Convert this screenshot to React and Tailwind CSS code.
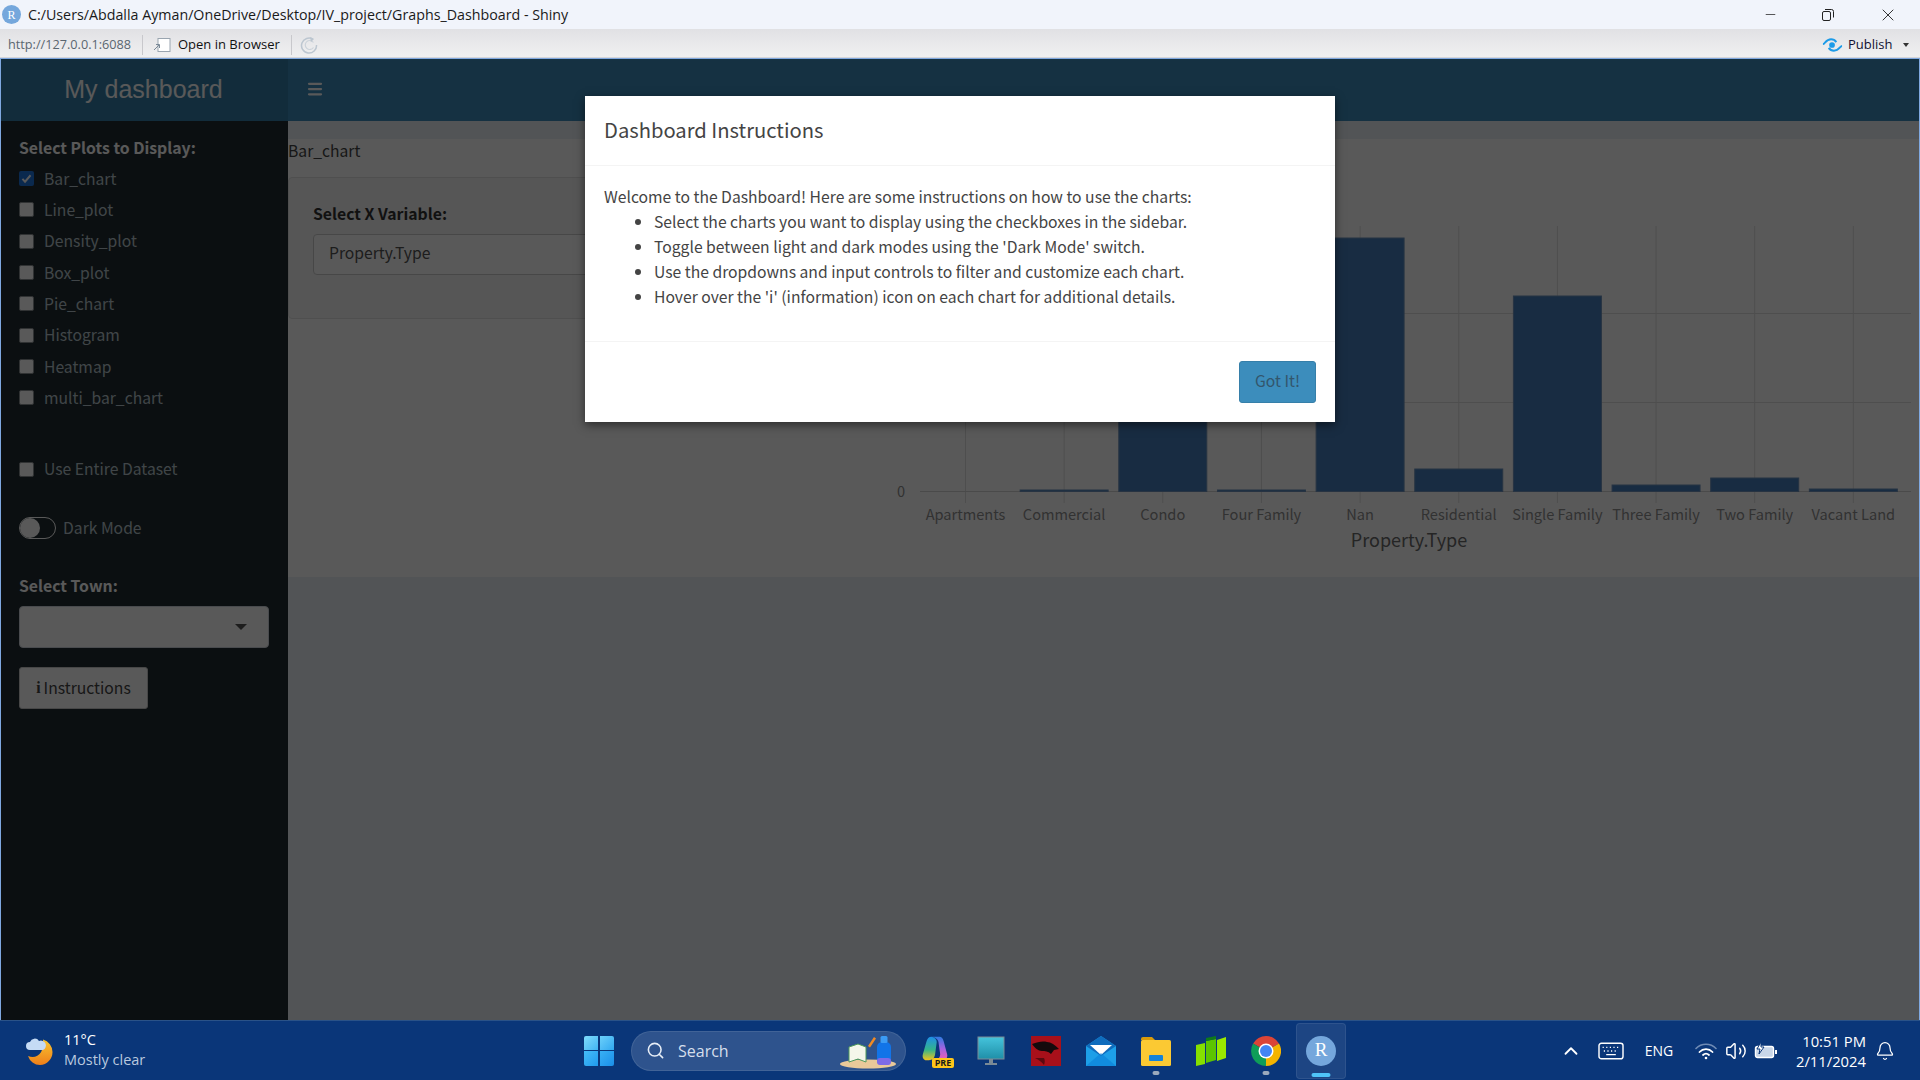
import React from 'react';
import { Search, Bell, Volume2, ChevronUp, Minus, X, Menu } from 'lucide-react';

const plots = ['Bar_chart', 'Line_plot', 'Density_plot', 'Box_plot', 'Pie_chart', 'Histogram', 'Heatmap', 'multi_bar_chart'];

const bars = [
    { name: 'Apartments', top: 491.5 },
    { name: 'Commercial', top: 490 },
    { name: 'Condo', top: 300 },
    { name: 'Four Family', top: 490 },
    { name: 'Nan', top: 238 },
    { name: 'Residential', top: 469 },
    { name: 'Single Family', top: 296 },
    { name: 'Three Family', top: 485 },
    { name: 'Two Family', top: 478 },
    { name: 'Vacant Land', top: 489 },
];

const instructions = [
    'Select the charts you want to display using the checkboxes in the sidebar.',
    "Toggle between light and dark modes using the 'Dark Mode' switch.",
    'Use the dropdowns and input controls to filter and customize each chart.',
    "Hover over the 'i' (information) icon on each chart for additional details.",
];

const Checkbox = ({ checked }) => (
    <span className={`w-[15px] h-[15px] rounded-[2px] flex items-center justify-center shrink-0 ${checked ? 'bg-[#1f75e0]' : 'bg-white border border-[#8a8f92]'}`}>
        {checked && (
            <svg viewBox="0 0 16 16" className="w-[13px] h-[13px]">
                <path d="M3 8.5l3.2 3.5L13 4" fill="none" stroke="#ffffff" strokeWidth="2.4" />
            </svg>
        )}
    </span>
);

const CheckRow = ({ label, checked }) => (
    <div className="h-[31.3px] flex items-center gap-[10px]">
        <Checkbox checked={checked} />
        <span className="text-[15.7px] text-[#b8c7ce] leading-none">{label}</span>
    </div>
);

const Sidebar = () => (
    <aside className="w-[287px] shrink-0 bg-[#222d32] px-[18px] pt-[17px]">
        <div className="h-[20px] leading-[20px] text-[15.8px] font-bold text-white">Select Plots to Display:</div>
        <div className="mt-[5px]">
            {plots.map((p, i) => <CheckRow key={p} label={p} checked={i === 0} />)}
        </div>
        <div className="mt-[40px]">
            <CheckRow label="Use Entire Dataset" />
        </div>
        <div className="mt-[32px] h-[22px] flex items-center gap-[7px]">
            <span className="w-[37px] h-[22px] rounded-full border border-white flex">
                <span className="w-[20px] h-[20px] rounded-full bg-white" />
            </span>
            <span className="text-[15.7px] text-[#b8c7ce] leading-none">Dark Mode</span>
        </div>
        <div className="mt-[37px] h-[20px] leading-[20px] text-[15.8px] font-bold text-white">Select Town:</div>
        <div className="mt-[10px] w-[250px] h-[42px] bg-white rounded-[4px] border border-[#d2d6de] flex items-center justify-end pr-[21px]">
            <span className="w-0 h-0 border-x-[6px] border-x-transparent border-t-[6px] border-t-[#555555]" />
        </div>
        <button className="mt-[19px] w-[129px] h-[42px] bg-white rounded-[3px] border border-[#cccccc] text-[15.7px] text-[#444444] flex items-center justify-center gap-[3px]">
            <span className="font-['Liberation_Serif',serif] font-bold">i</span>
            Instructions
        </button>
    </aside>
);

// plotly style bar chart, coordinates are page pixels minus the svg offset
const BarChart = () => {
    const ox = 880;
    const oy = 177;
    const cx = (i) => 965.5 - ox + i * 98.65;
    const base = 491.5 - oy;
    return (
        <svg width="1039" height="400" viewBox="0 0 1039 400" className="block shrink-0">
            {bars.map((b, i) => (
                <line key={b.name} x1={cx(i)} x2={cx(i)} y1={226 - oy} y2={503 - oy} stroke="#dfdfdf" />
            ))}
            {[313.5, 402.5].map((y) => (
                <line key={y} x1="40" x2="1031" y1={y - oy} y2={y - oy} stroke="#dfdfdf" />
            ))}
            <line x1="40" x2="1031" y1={base} y2={base} stroke="#d5d5d5" />
            {bars.map((b, i) => (
                b.top < 491 && <rect key={b.name} x={cx(i) - 44} y={b.top - oy} width="88" height={491.5 - b.top} fill="#457ebd" stroke="#6f93bd" strokeWidth="1" />
            ))}
            <text x="21" y={base + 5} textAnchor="middle" fontSize="14.6" fill="#8f8f8f">0</text>
            {bars.map((b, i) => (
                <text key={b.name} x={cx(i)} y={515 - oy + 5} textAnchor="middle" fontSize="14.6" fill="#8f8f8f">{b.name}</text>
            ))}
            <text x="529" y={541 - oy + 6} textAnchor="middle" fontSize="18" fill="#6a6a6a">Property.Type</text>
        </svg>
    );
};

const Modal = () => (
    <div className="w-[750px] h-[326px] bg-white shadow-[0_3px_9px_rgba(0,0,0,0.5)] text-[#444444] flex flex-col">
        <div className="h-[70px] border-b border-[#f4f4f4] px-[19px] flex items-center text-[20.2px] leading-none">Dashboard Instructions</div>
        <div className="h-[176px] border-b border-[#f4f4f4] px-[19px] pt-[18px] text-[15.7px] leading-[25px]">
            <p>Welcome to the Dashboard! Here are some instructions on how to use the charts:</p>
            <ul className="list-disc pl-[50px]">
                {instructions.map((t) => <li key={t}>{t}</li>)}
            </ul>
        </div>
        <div className="flex-1 flex justify-end pr-[19px] pt-[19px]">
            <button className="w-[77px] h-[42px] bg-[#3c8dbc] border border-[#367fa9] rounded-[3px] text-[15.7px] leading-none pb-[2px] text-[#33566c]">Got It!</button>
        </div>
    </div>
);

const Dashboard = () => (
    <div className="relative flex-1 min-h-0 border-x border-t border-[#7fa8e0] flex flex-col font-['Noto_Sans_CJK_SC',sans-serif]">
        <header className="h-[62px] shrink-0 bg-[#3c8dbc] flex">
            <div className="w-[287px] bg-[#367fa9] flex items-center justify-center font-['Liberation_Sans',sans-serif] text-[25px] text-white pr-[2px]">My dashboard</div>
            <div className="pl-[18px] pb-[2px] flex items-center">
                <Menu className="w-[18px] h-[18px] text-white" strokeWidth={3} />
            </div>
        </header>
        <div className="flex-1 min-h-0 flex">
            <Sidebar />
            <main className="flex-1 bg-[#ecf0f5] pt-[18px]">
                <section className="h-[438px] bg-white flex flex-col">
                    <div className="h-[38px] text-[15.7px] text-[#444444] leading-[24px]">Bar_chart</div>
                    <div className="flex">
                        <div className="w-[530px] h-[142px] bg-[#f5f5f5] border border-[#e3e3e3] rounded-[4px] px-[24px] pt-[25px] shrink-0">
                            <div className="text-[15.8px] font-bold text-[#333333] h-[22px] leading-[22px]">Select X Variable:</div>
                            <div className="mt-[9px] h-[41px] bg-white border border-[#cccccc] rounded-[4px] flex items-center pl-[15px] pb-[4px] text-[15.7px] text-[#555555]">Property.Type</div>
                        </div>
                        <div className="ml-[62px]">
                            <BarChart />
                        </div>
                    </div>
                </section>
            </main>
        </div>
        <div className="absolute inset-0 bg-black/65 flex justify-center pt-[37px]">
            <Modal />
        </div>
    </div>
);

const TitleBar = () => (
    <div className="h-[29px] shrink-0 bg-[#f1f4fb] flex items-center pl-[2px] font-['Open_Sans',sans-serif]">
        <span className="w-[19px] h-[19px] rounded-full bg-[#75a7dc] text-white flex items-center justify-center text-[12px] font-['Liberation_Serif',serif]">R</span>
        <span className="ml-[7px] text-[14.25px] text-[#1a1a1a] whitespace-nowrap">C:/Users/Abdalla Ayman/OneDrive/Desktop/IV_project/Graphs_Dashboard - Shiny</span>
        <div className="ml-auto flex items-center">
            <Minus className="w-[15px] h-[15px] mr-[43px] text-[#222222]" strokeWidth={1.2} />
            <svg viewBox="0 0 14 14" className="w-[14px] h-[14px] mr-[43px]">
                <rect x="1.5" y="3.5" width="8" height="9" rx="1.5" fill="none" stroke="#222222" />
                <path d="M4 1.5h6.5a2 2 0 0 1 2 2v6" fill="none" stroke="#222222" />
            </svg>
            <X className="w-[20px] h-[20px] mr-[22px] text-[#222222]" strokeWidth={1.1} />
        </div>
    </div>
);

const Toolbar = () => (
    <div className="h-[29px] shrink-0 bg-gradient-to-b from-[#e1e1e4] to-[#f0f0f1] border-b border-[#d5d5d8] flex items-center pt-[3px] font-['Open_Sans',sans-serif] text-[13px]">
        <span className="ml-[8px] text-[12.7px] text-[#5a6670] w-[124px] whitespace-nowrap">http://127.0.0.1:6088</span>
        <span className="ml-[10px] w-px h-[20px] bg-[#c8c8cc]" />
        <svg viewBox="0 0 18 16" className="ml-[10px] w-[18px] h-[16px]">
            <rect x="5" y="1.5" width="12" height="13" fill="#ffffff" stroke="#9aa5b0" />
            <path d="M1 13l5-5M3 7.5h3.5V11" fill="none" stroke="#7b8a98" />
        </svg>
        <span className="ml-[7px] w-[102px] text-[#111111] whitespace-nowrap">Open in Browser</span>
        <span className="ml-[11px] w-px h-[20px] bg-[#c8c8cc]" />
        <svg viewBox="0 0 18 18" className="ml-[8px] w-[18px] h-[18px]">
            <path d="M13 3.200A7.500 7.500 0 1 0 16.500 9" fill="none" stroke="#bcc6d0" strokeWidth="1.500" />
            <path d="M13.500 6.500A4.500 4.500 0 1 0 13.500 11.500" fill="none" stroke="#ccd3da" strokeWidth="1.200" />
            <path d="M10 1l4 2-3 3z" fill="#bcc6d0" />
        </svg>
        <div className="ml-auto flex items-center">
            <svg viewBox="0 0 22 16" className="w-[21px] h-[16px]">
                <circle cx="10.5" cy="8" r="3" fill="#1d9be8" />
                <path d="M1 7c2 0 3-5 8.5-5 3 0 4.500 1.500 5.500 3M21 9c-2 0-3 5-8.500 5-3 0-4.500-1.500-5.500-3" fill="none" stroke="#1d9be8" strokeWidth="2" />
            </svg>
            <span className="ml-[5px] text-[#111133] w-[43px]">Publish</span>
            <span className="ml-[12px] mr-[11px] w-0 h-0 border-x-[3.5px] border-x-transparent border-t-[4px] border-t-[#333333]" />
        </div>
    </div>
);

const MoonIcon = () => (
    <svg viewBox="0 0 28 28" className="w-[28px] h-[28px]">
        <defs>
            <linearGradient id="moon" x1="0" y1="0" x2="0" y2="1">
                <stop offset="0" stopColor="#f7c531" />
                <stop offset="1" stopColor="#ef7f1a" />
            </linearGradient>
        </defs>
        <path d="M18 2.500a13 13 0 0 1 9.500 12.500A13 13 0 0 1 15 28 13 13 0 0 1 3 19c9 4 17-4 15-16.500z" fill="url(#moon)" />
        <path d="M5 13a4 4 0 0 1 0-8 5 5 0 0 1 9-1 4.500 4.500 0 0 1 4 9z" fill="#c5dbf5" />
    </svg>
);

const TaskIcon = ({ children, active, dot }) => (
    <div className="relative w-[55px] h-[56px] flex items-center justify-center">
        {active && <span className="absolute inset-y-0 left-[2px] right-[3px] rounded-[4px] bg-[#ffffff14] border border-[#ffffff14]" />}
        <span className="relative flex">{children}</span>
        {dot && <span className="absolute bottom-[4px] left-1/2 -translate-x-1/2 w-[7px] h-[4px] rounded-full bg-[#9aa9bd]" />}
        {active && <span className="absolute bottom-[2px] left-1/2 -translate-x-1/2 w-[19px] h-[4px] rounded-full bg-[#4fc3f7]" />}
    </div>
);

const Taskbar = () => (
    <div className="h-[60px] shrink-0 bg-[#0a3679] border-t border-[#2a5288] flex items-center font-['Open_Sans',sans-serif] text-white">
        <div className="w-[584px] pl-[25px] flex items-center">
            <MoonIcon />
            <div className="ml-[11px] text-[14.5px] leading-[20px] pb-[1px]">
                <div>11°C</div>
                <div className="text-[#b9c9df]">Mostly clear</div>
            </div>
        </div>
        <div className="w-[30px] h-[30px] grid grid-cols-2 gap-[1.5px]">
            <span className="rounded-tl-[2px] bg-gradient-to-br from-[#7fdcfb] to-[#3fb4f3]" />
            <span className="rounded-tr-[2px] bg-gradient-to-br from-[#6bd0fa] to-[#2fa8f0]" />
            <span className="rounded-bl-[2px] bg-gradient-to-br from-[#45bdf7] to-[#1f9bee]" />
            <span className="rounded-br-[2px] bg-gradient-to-br from-[#38b0f5] to-[#1a8fe8]" />
        </div>
        <div className="ml-[17px] w-[275px] h-[40px] rounded-full bg-[#ffffff26] border border-[#ffffff18] flex items-center pl-[14px] relative">
            <Search className="w-[19px] h-[19px] text-[#e6edf6]" strokeWidth={2} />
            <span className="ml-[13px] text-[16px] text-[#d5dfec]">Search</span>
            <svg viewBox="0 0 58 34" className="absolute right-[8px] top-[3px] w-[58px] h-[34px]">
                <ellipse cx="29" cy="29" rx="28" ry="4.500" fill="#e9c99a" />
                <path d="M10 12l9-3 8 3v15l-8-3-9 3z" fill="#f4f6ea" stroke="#4f9a5a" />
                <path d="M29 11l6-9 2 1.500-6 9z" fill="#f08a24" />
                <rect x="38" y="7" width="14" height="23" rx="5" fill="#1274e8" />
                <rect x="38" y="23" width="14" height="7" rx="3" fill="#7d6be8" />
                <rect x="41.500" y="1" width="7" height="7" rx="1.500" fill="#3b9bf5" />
            </svg>
        </div>
        <div className="ml-[2.500px] flex items-center">
            <TaskIcon>
                <div className="relative w-[30px] h-[30px]">
                    <svg viewBox="0 0 30 30" className="w-[28px] h-[26px]">
                        <defs>
                            <linearGradient id="copL" x1="0" y1="0" x2="0" y2="1">
                                <stop offset="0" stopColor="#1f8fe8" />
                                <stop offset="0.55" stopColor="#35b58a" />
                                <stop offset="1" stopColor="#f2c41c" />
                            </linearGradient>
                            <linearGradient id="copR" x1="0" y1="0" x2="0" y2="1">
                                <stop offset="0" stopColor="#2f7ae0" />
                                <stop offset="0.5" stopColor="#a463e0" />
                                <stop offset="1" stopColor="#ee5fb0" />
                            </linearGradient>
                        </defs>
                        <path d="M11 1h9c3 0 4 2 5 5l4 15c1 4-2 7-5 7h-8c3-1 5-4 5-7l-2-14c-1-4-4-5-8-6z" fill="url(#copR)" />
                        <path d="M11 1c4 1 6 3 6 6l-2 15c-1 4-3 6-7 6H5c-3 0-5-3-4-7l4-14c1-4 3-6 6-6z" fill="url(#copL)" />
                    </svg>
                    <span className="absolute right-[-3px] bottom-[-2px] w-[22px] h-[10px] bg-[#ffc61a] rounded-[2px] text-[#1a1a1a] text-center text-[9px] leading-[10px] font-bold">PRE</span>
                </div>
            </TaskIcon>
            <TaskIcon>
                <svg viewBox="0 0 28 30" className="w-[28px] h-[30px]">
                    <defs>
                        <linearGradient id="mon" x1="0" y1="0" x2="0" y2="1">
                            <stop offset="0" stopColor="#45c4dc" />
                            <stop offset="1" stopColor="#1f8fa8" />
                        </linearGradient>
                    </defs>
                    <rect x="1" y="1" width="26" height="22" fill="url(#mon)" stroke="#7a8a96" />
                    <rect x="12" y="23" width="4" height="4" fill="#7a8a96" />
                    <rect x="8" y="27" width="12" height="2" fill="#7a8a96" />
                </svg>
            </TaskIcon>
            <TaskIcon>
                <svg viewBox="0 0 30 30" className="w-[30px] h-[30px]">
                    <rect width="30" height="30" fill="#a8101a" />
                    <path d="M1 8c6-2 10-3 15-2 4 0 8 3 12 7l-5 1-3 4c-3-3-6-3-9-3-4 0-7-3-10-7z" fill="#140a0c" />
                    <path d="M4 22c4 2 7 4 9 7 1-3 1-5 0-7z" fill="#5a0a10" />
                </svg>
            </TaskIcon>
            <TaskIcon>
                <svg viewBox="0 0 30 30" className="w-[30px] h-[30px]">
                    <path d="M15 0L30 10v20H0V10z" fill="#1d9fe8" />
                    <path d="M15 0L30 10 15 20 0 10z" fill="#0f6cbd" />
                    <path d="M4 9h22L15 19z" fill="#ffffff" />
                    <path d="M30 30H0l15-13z" fill="#0a80d8" opacity="0.6" />
                </svg>
            </TaskIcon>
            <TaskIcon dot>
                <svg viewBox="0 0 30 30" className="w-[30px] h-[30px]">
                    <path d="M0 3a2 2 0 0 1 2-2h9l3 3H0z" fill="#d99b0a" />
                    <rect y="4" width="30" height="26" rx="1.500" fill="#fbc933" />
                    <rect x="8" y="19" width="14" height="6" rx="1" fill="#1583d8" />
                </svg>
            </TaskIcon>
            <TaskIcon>
                <svg viewBox="0 0 30 30" className="w-[30px] h-[30px]">
                    <path d="M0 9l9-2v21l-9 2z" fill="#86e000" />
                    <path d="M10 5l10-2v21l-10 3z" fill="#5cc400" />
                    <path d="M21 4l9-3v21l-9 3z" fill="#9be800" />
                    <path d="M10 2l10-2v3l-10 2z" fill="#0f7a1a" />
                </svg>
            </TaskIcon>
            <TaskIcon dot>
                <svg viewBox="0 0 30 30" className="w-[30px] h-[30px]">
                    <path d="M15 15L2.100 7.500A15 15 0 0 1 28 7.500z" fill="#db4437" />
                    <path d="M15 15L28 7.500A15 15 0 0 1 15 30z" fill="#f4b400" />
                    <path d="M15 15V30A15 15 0 0 1 2.100 7.500z" fill="#0f9d58" />
                    <circle cx="15" cy="15" r="7.500" fill="#ffffff" />
                    <circle cx="15" cy="15" r="6" fill="#4285f4" />
                </svg>
            </TaskIcon>
            <TaskIcon active>
                <span className="w-[30px] h-[30px] rounded-full bg-[#75a7dc] flex items-center justify-center text-[19px] text-white font-['Liberation_Serif',serif]">R</span>
            </TaskIcon>
        </div>
        <div className="ml-auto pr-[25px] flex items-center">
            <ChevronUp className="w-[22px] h-[22px]" strokeWidth={2} />
            <svg viewBox="0 0 22 15" className="ml-[14px] w-[30px] h-[18px]">
                <rect x="1" y="1" width="20" height="13" rx="2" fill="none" stroke="#ffffff" strokeWidth="1.2" />
                <path d="M4 4.500h1M7 4.500h1M10 4.500h1M13 4.500h1M16 4.500h1M5 7.500h1M8 7.500h1M11 7.500h1M14 7.500h1M7 10.500h8" stroke="#ffffff" strokeWidth="1.200" />
            </svg>
            <span className="ml-[13px] w-[40px] text-center text-[14px]">ENG</span>
            <svg viewBox="0 0 22 18" className="ml-[16px] w-[22px] h-[18px]" fill="none" strokeLinecap="round">
                <path d="M1 6.500a14 14 0 0 1 20 0" stroke="#6f8bb5" strokeWidth="1.600" />
                <path d="M4.500 10a9 9 0 0 1 13 0M8 13a4.500 4.500 0 0 1 6 0" stroke="#ffffff" strokeWidth="1.800" />
                <circle cx="11" cy="16" r="1.300" fill="#ffffff" />
            </svg>
            <Volume2 className="ml-[8px] w-[22px] h-[22px]" strokeWidth={1.6} />
            <svg viewBox="0 0 24 18" className="ml-[7px] w-[24px] h-[18px]">
                <rect x="1.500" y="4.500" width="18" height="11" rx="2" fill="#c9d6e8" stroke="#ffffff" strokeWidth="1.400" />
                <rect x="21" y="8" width="2" height="4" fill="#ffffff" />
                <path d="M7 0L3 7h3l-1 5 5-7H7z" fill="#ffffff" stroke="#0a3679" />
            </svg>
            <div className="ml-[4px] w-[84px] text-right text-[14.8px] leading-[20px]">
                <div>10:51 PM</div>
                <div>2/11/2024</div>
            </div>
            <Bell className="ml-[9px] w-[20px] h-[20px]" strokeWidth={1.5} />
        </div>
    </div>
);

const App = () => (
    <div className="w-[1920px] h-[1080px] overflow-hidden flex flex-col">
        <TitleBar />
        <Toolbar />
        <Dashboard />
        <Taskbar />
    </div>
);

export default App;
